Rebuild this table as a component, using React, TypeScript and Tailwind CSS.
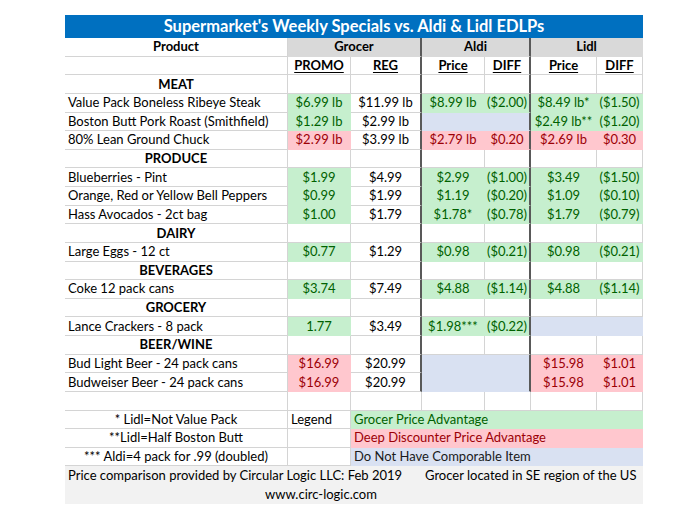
import React from 'react';

type Fill = 'g' | 'r' | 'b' | 'h' | 'f';
type C = {
  t?: string;
  f?: Fill;
  span?: number;
  rs?: number;
  a?: 'l' | 'c';
  b?: boolean;
  u?: boolean;
  skip?: number;
};

const fills: Record<Fill, string> = {
  g: 'bg-[#c6efce] text-[#006100] border-[#c6efce]',
  r: 'bg-[#ffc7ce] text-[#9c0006] border-[#ffc7ce]',
  b: 'bg-[#d9e1f2] text-[#1a1a1a] border-[#d9e1f2]',
  h: 'bg-[#d9d9d9] text-black border-[#d9d9d9]',
  f: 'bg-[#f2f2f2] text-black border-[#f2f2f2]',
};

const sec = (name: string): C[] => [{ t: name, b: true }, {}, {}, {}, {}, {}, {}];
const item = (name: string, ...cells: C[]): C[] => [{ t: name, a: 'l' }, ...cells];

const rows: C[][] = [
  [
    { t: 'Product', b: true },
    { t: 'Grocer', f: 'h', span: 2, b: true },
    { t: 'Aldi', f: 'h', span: 2, b: true },
    { t: 'Lidl', f: 'h', span: 2, b: true },
  ],
  [
    {},
    { t: 'PROMO', b: true, u: true },
    { t: 'REG', b: true, u: true },
    { t: 'Price', b: true, u: true },
    { t: 'DIFF', b: true, u: true },
    { t: 'Price', b: true, u: true },
    { t: 'DIFF', b: true, u: true },
  ],
  sec('MEAT'),
  item('Value Pack Boneless Ribeye Steak', { t: '$6.99 lb', f: 'g' }, { t: '$11.99 lb' }, { t: '$8.99 lb', f: 'g' }, { t: '($2.00)', f: 'g' }, { t: '$8.49 lb*', f: 'g' }, { t: '($1.50)', f: 'g' }),
  item('Boston Butt Pork Roast (Smithfield)', { t: '$1.29 lb', f: 'g' }, { t: '$2.99 lb' }, { f: 'b', span: 2 }, { t: '$2.49 lb**', f: 'g' }, { t: '($1.20)', f: 'g' }),
  item('80% Lean Ground Chuck', { t: '$2.99 lb', f: 'r' }, { t: '$3.99 lb' }, { t: '$2.79 lb', f: 'r' }, { t: '$0.20', f: 'r' }, { t: '$2.69 lb', f: 'r' }, { t: '$0.30', f: 'r' }),
  sec('PRODUCE'),
  item('Blueberries - Pint', { t: '$1.99', f: 'g' }, { t: '$4.99' }, { t: '$2.99', f: 'g' }, { t: '($1.00)', f: 'g' }, { t: '$3.49', f: 'g' }, { t: '($1.50)', f: 'g' }),
  item('Orange, Red or Yellow Bell Peppers', { t: '$0.99', f: 'g' }, { t: '$1.99' }, { t: '$1.19', f: 'g' }, { t: '($0.20)', f: 'g' }, { t: '$1.09', f: 'g' }, { t: '($0.10)', f: 'g' }),
  item('Hass Avocados - 2ct bag', { t: '$1.00', f: 'g' }, { t: '$1.79' }, { t: '$1.78*', f: 'g' }, { t: '($0.78)', f: 'g' }, { t: '$1.79', f: 'g' }, { t: '($0.79)', f: 'g' }),
  sec('DAIRY'),
  item('Large Eggs - 12 ct', { t: '$0.77', f: 'g' }, { t: '$1.29' }, { t: '$0.98', f: 'g' }, { t: '($0.21)', f: 'g' }, { t: '$0.98', f: 'g' }, { t: '($0.21)', f: 'g' }),
  sec('BEVERAGES'),
  item('Coke 12 pack cans', { t: '$3.74', f: 'g' }, { t: '$7.49' }, { t: '$4.88', f: 'g' }, { t: '($1.14)', f: 'g' }, { t: '$4.88', f: 'g' }, { t: '($1.14)', f: 'g' }),
  sec('GROCERY'),
  item('Lance Crackers - 8 pack', { t: '1.77', f: 'g' }, { t: '$3.49' }, { t: '$1.98***', f: 'g' }, { t: '($0.22)', f: 'g' }, { f: 'b', span: 2 }),
  sec('BEER/WINE'),
  item('Bud Light Beer - 24 pack cans', { t: '$16.99', f: 'r' }, { t: '$20.99' }, { f: 'b', span: 2, rs: 2 }, { t: '$15.98', f: 'r' }, { t: '$1.01', f: 'r' }),
  item('Budweiser Beer - 24 pack cans', { t: '$16.99', f: 'r' }, { t: '$20.99' }, { skip: 2 }, { t: '$15.98', f: 'r' }, { t: '$1.01', f: 'r' }),
  [{}, {}, {}, {}, {}, {}, {}],
  [{ t: '* Lidl=Not Value Pack' }, { t: 'Legend', a: 'l' }, { t: 'Grocer Price Advantage', f: 'g', span: 5, a: 'l' }],
  [{ t: '**Lidl=Half Boston Butt' }, {}, { t: 'Deep Discounter Price Advantage', f: 'r', span: 5, a: 'l' }],
  [{ t: '*** Aldi=4 pack for .99 (doubled)' }, {}, { t: 'Do Not Have Comporable Item', f: 'b', span: 5, a: 'l' }],
];

const spanCls: Record<number, string> = { 1: '', 2: 'col-span-2', 5: 'col-span-5' };

function Cell({ c, thick }: { c: C; thick: boolean }) {
  const base = c.f ? fills[c.f] : 'bg-white text-black border-[#d4d4d4]';
  return (
    <div
      className={[
        'flex items-center whitespace-nowrap overflow-visible border-r border-b px-[3px]',
        c.a === 'l' ? 'justify-start' : 'justify-center',
        spanCls[c.span ?? 1],
        c.rs === 2 ? 'row-span-2' : '',
        base,
        thick ? 'border-r-2 border-r-[#595959]' : '',
        c.b ? 'font-bold' : '',
      ].join(' ')}
    >
      {c.t && <span className={c.u ? 'underline underline-offset-2' : ''}>{c.t}</span>}
    </div>
  );
}

export default function App() {
  return (
    <div className="w-[700px] h-[526px] bg-white pt-[15px] pl-[65px] font-['Lato',sans-serif] text-[13px] leading-none">
      <div className="w-[578px]">
        <div className="h-[23px] bg-[#0070c0] text-white font-bold text-[16.5px] flex items-center justify-center">
          Supermarket's Weekly Specials vs. Aldi &amp; Lidl EDLPs
        </div>
        <div className="grid grid-cols-[223px_63px_71px_63px_46px_66px_46px] auto-rows-[18.64px]">
          {rows.map((row, ri) => {
            let col = 0;
            return row.map((c, ci) => {
              if (c.skip) {
                col += c.skip;
                return null;
              }
              col += c.span ?? 1;
              const thick = ri < 19 && (col === 3 || col === 5);
              return <Cell key={`${ri}-${ci}`} c={c} thick={thick} />;
            });
          })}
        </div>
        <div className="bg-[#f2f2f2] text-black">
          <div className="h-[18.64px] flex items-center whitespace-nowrap">
            <span className="w-[357px] pl-[3px]">Price comparison provided by Circular Logic LLC: Feb 2019</span>
            <span className="pl-[3px]">Grocer located in SE region of the US</span>
          </div>
          <div className="h-[18.64px] flex items-center pl-[200px]">www.circ-logic.com</div>
        </div>
      </div>
    </div>
  );
}
